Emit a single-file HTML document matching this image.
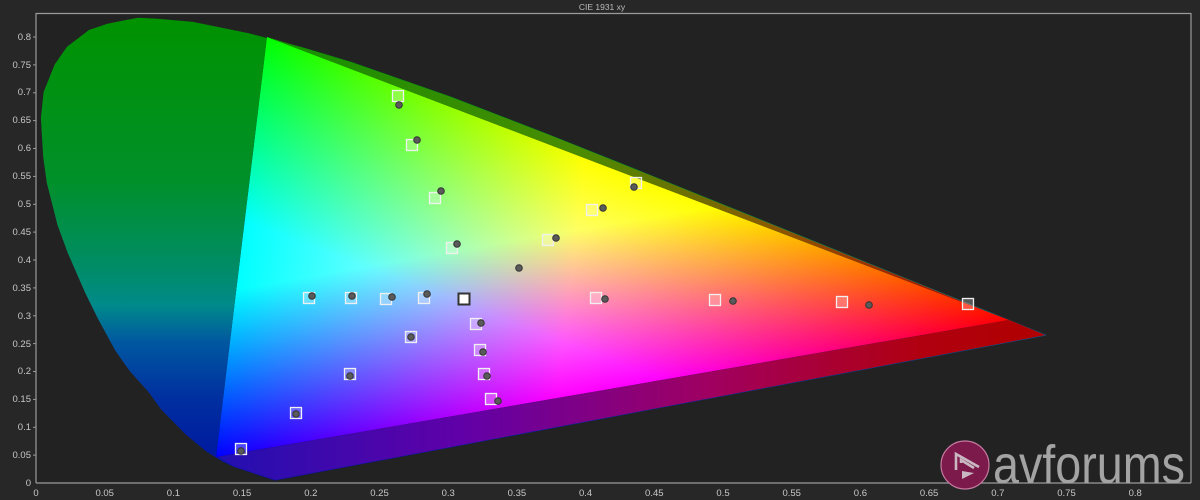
<!DOCTYPE html>
<html><head><meta charset="utf-8"><style>
html,body{margin:0;padding:0;background:#272727;}
svg{display:block;}
text{font-family:"Liberation Sans",sans-serif;}
</style></head><body>
<svg width="1200" height="500" viewBox="0 0 1200 500" xmlns="http://www.w3.org/2000/svg">
<defs>
<linearGradient id="lg" x1="0" y1="20" x2="0" y2="480" gradientUnits="userSpaceOnUse">
<stop offset="0" stop-color="#009200"/>
<stop offset="0.35" stop-color="#00902a"/>
<stop offset="0.55" stop-color="#008c6a"/>
<stop offset="0.62" stop-color="#008a8a"/>
<stop offset="0.7" stop-color="#0058a0"/>
<stop offset="0.82" stop-color="#0030a0"/>
<stop offset="1" stop-color="#0010a0"/>
</linearGradient>
<linearGradient id="ug" x1="267" y1="0" x2="1045" y2="0" gradientUnits="userSpaceOnUse">
<stop offset="0" stop-color="#129000"/>
<stop offset="0.4" stop-color="#4a8c00"/>
<stop offset="0.65" stop-color="#8a5a00"/>
<stop offset="0.85" stop-color="#a81800"/>
<stop offset="1" stop-color="#b00000"/>
</linearGradient>
<linearGradient id="bg2" x1="210" y1="0" x2="1045" y2="0" gradientUnits="userSpaceOnUse">
<stop offset="0" stop-color="#2010b0"/>
<stop offset="0.3" stop-color="#6000a8"/>
<stop offset="0.6" stop-color="#a00060"/>
<stop offset="0.85" stop-color="#b00010"/>
<stop offset="1" stop-color="#b00000"/>
</linearGradient>
<linearGradient id="gr" x1="1009" y1="320" x2="243.9" y2="227.1" gradientUnits="userSpaceOnUse">
<stop offset="0" stop-color="#ff0000" stop-opacity="1"/>
<stop offset="0.57" stop-color="#ff0000" stop-opacity="1"/>
<stop offset="1" stop-color="#ff0000" stop-opacity="0"/>
</linearGradient>
<linearGradient id="gg" x1="267" y1="37" x2="336" y2="436.3" gradientUnits="userSpaceOnUse">
<stop offset="0" stop-color="#00ff00" stop-opacity="1"/>
<stop offset="0.6" stop-color="#00ff00" stop-opacity="1"/>
<stop offset="1" stop-color="#00ff00" stop-opacity="0"/>
</linearGradient>
<linearGradient id="gb" x1="216" y1="457" x2="362.3" y2="73.4" gradientUnits="userSpaceOnUse">
<stop offset="0" stop-color="#0000ff" stop-opacity="1"/>
<stop offset="0.56" stop-color="#0000ff" stop-opacity="1"/>
<stop offset="1" stop-color="#0000ff" stop-opacity="0"/>
</linearGradient>
</defs>
<rect x="0" y="0" width="1200" height="500" fill="#272727"/>
<rect x="36" y="13" width="1155" height="470" fill="#222222"/>
<text x="602" y="10" font-size="8.5" fill="#bbbbbb" text-anchor="middle">CIE 1931 xy</text>
<path d="M275,480 L233.9,466.4 L222.2,460.8 L206.5,451 L186.6,434.6 L161.4,409 L148.8,391.6 L130.4,371.1 L115.7,350.3 L98.4,318.5 L85.5,292.3 L68.3,252.9 L58,224.9 L47.3,182.8 L43.7,156.9 L41.4,117.9 L44.1,92.2 L55.1,64.8 L67.2,47.3 L89.4,30.3 L107.6,24.2 L138.1,18.2 L157.5,19.2 L192.9,22.4 L248.6,33.7 L301,47.3 L351.5,62.5 L450.4,97 L548.6,134.8 L646.2,173.8 L740.2,211.7 L826.3,246.5 L897.5,275.3 L986.1,311.1 L1045.5,335.1 Z" fill="url(#lg)" stroke="url(#lg)" stroke-width="1" stroke-linejoin="round"/>
<path d="M267,37 L301,47.3 L351.5,62.5 L450.4,97 L548.6,134.8 L646.2,173.8 L740.2,211.7 L826.3,246.5 L897.5,275.3 L986.1,311.1 L1045.5,335.1 L1009,320 Z" fill="url(#ug)"/>
<path d="M216,457 L206.5,451 L233.9,466.4 L275,480 L1045.5,335.1 L1009,320 Z" fill="url(#bg2)"/>
<g style="isolation:isolate">
<polygon points="267,37 1009,320 216,457" fill="#000"/>
<polygon points="267,37 1009,320 216,457" fill="url(#gr)" style="mix-blend-mode:screen"/>
<polygon points="267,37 1009,320 216,457" fill="url(#gg)" style="mix-blend-mode:screen"/>
<polygon points="267,37 1009,320 216,457" fill="url(#gb)" style="mix-blend-mode:screen"/>
</g>
<g stroke="#9a9a9a" stroke-width="1.2" fill="none">
<line x1="36" y1="13.5" x2="1191" y2="13.5"/>
<line x1="36" y1="13" x2="36" y2="483"/>
<line x1="36" y1="483" x2="1191" y2="483"/>
<line x1="1191" y1="13" x2="1191" y2="483"/>
</g>
<g fill="#c8c8c8" font-size="9.5" text-anchor="end">
<text x="31" y="486">0</text>
<text x="31" y="458">0.05</text>
<text x="31" y="430">0.1</text>
<text x="31" y="402">0.15</text>
<text x="31" y="374">0.2</text>
<text x="31" y="347">0.25</text>
<text x="31" y="319">0.3</text>
<text x="31" y="291">0.35</text>
<text x="31" y="263">0.4</text>
<text x="31" y="235">0.45</text>
<text x="31" y="207">0.5</text>
<text x="31" y="179">0.55</text>
<text x="31" y="151">0.6</text>
<text x="31" y="123">0.65</text>
<text x="31" y="95">0.7</text>
<text x="31" y="68">0.75</text>
<text x="31" y="40">0.8</text>
</g>
<g stroke="#9a9a9a" stroke-width="1">
<line x1="33" y1="455.1" x2="36" y2="455.1"/><line x1="33" y1="427.3" x2="36" y2="427.3"/><line x1="33" y1="399.4" x2="36" y2="399.4"/><line x1="33" y1="371.5" x2="36" y2="371.5"/><line x1="33" y1="343.6" x2="36" y2="343.6"/><line x1="33" y1="315.8" x2="36" y2="315.8"/><line x1="33" y1="287.9" x2="36" y2="287.9"/><line x1="33" y1="260" x2="36" y2="260"/><line x1="33" y1="232.1" x2="36" y2="232.1"/><line x1="33" y1="204.3" x2="36" y2="204.3"/><line x1="33" y1="176.4" x2="36" y2="176.4"/><line x1="33" y1="148.5" x2="36" y2="148.5"/><line x1="33" y1="120.6" x2="36" y2="120.6"/><line x1="33" y1="92.8" x2="36" y2="92.8"/><line x1="33" y1="64.9" x2="36" y2="64.9"/><line x1="33" y1="37" x2="36" y2="37"/>
</g>
<g fill="#c8c8c8" font-size="9.5" text-anchor="middle">
<text x="36" y="496">0</text><text x="104.7" y="496">0.05</text><text x="173.4" y="496">0.1</text><text x="242.1" y="496">0.15</text><text x="310.8" y="496">0.2</text><text x="379.5" y="496">0.25</text><text x="448.2" y="496">0.3</text><text x="516.9" y="496">0.35</text><text x="585.6" y="496">0.4</text><text x="654.3" y="496">0.45</text><text x="723" y="496">0.5</text><text x="791.7" y="496">0.55</text><text x="860.4" y="496">0.6</text><text x="929.1" y="496">0.65</text><text x="997.8" y="496">0.7</text><text x="1066.5" y="496">0.75</text><text x="1135.2" y="496">0.8</text>
</g>
<g fill="rgba(255,255,255,0.25)" stroke="#f0f0f0" stroke-width="1.3">
<rect x="392.5" y="90.5" width="11" height="11"/>
<rect x="406.5" y="139.5" width="11" height="11"/>
<rect x="429.5" y="192.5" width="11" height="11"/>
<rect x="446.5" y="242.5" width="11" height="11"/>
<rect x="586.5" y="204.5" width="11" height="11"/>
<rect x="542.5" y="234.5" width="11" height="11"/>
<rect x="630.5" y="177.5" width="11" height="11"/>
<rect x="303.5" y="292.5" width="11" height="11"/>
<rect x="345.5" y="292.5" width="11" height="11"/>
<rect x="380.5" y="293.5" width="11" height="11"/>
<rect x="418.5" y="292.5" width="11" height="11"/>
<rect x="590.5" y="292.5" width="11" height="11"/>
<rect x="709.5" y="294.5" width="11" height="11"/>
<rect x="836.5" y="296.5" width="11" height="11"/>
<rect x="962.5" y="298.5" width="11" height="11"/>
<rect x="470.5" y="318.5" width="11" height="11"/>
<rect x="405.5" y="331.5" width="11" height="11"/>
<rect x="474.5" y="344.5" width="11" height="11"/>
<rect x="344.5" y="368.5" width="11" height="11"/>
<rect x="478.5" y="368.5" width="11" height="11"/>
<rect x="485.5" y="393.5" width="11" height="11"/>
<rect x="290.5" y="407.5" width="11" height="11"/>
<rect x="235.5" y="443.5" width="11" height="11"/>
</g>
<rect x="458.5" y="293.5" width="11" height="11" fill="#ffffff" stroke="#333" stroke-width="2"/>
<g fill="#5a5a5a" stroke="#333" stroke-width="1">
<circle cx="399" cy="105" r="3.3"/><circle cx="417" cy="140" r="3.3"/><circle cx="441" cy="191" r="3.3"/><circle cx="457" cy="244" r="3.3"/><circle cx="603" cy="208" r="3.3"/><circle cx="556" cy="238" r="3.3"/><circle cx="634" cy="187" r="3.3"/><circle cx="519" cy="268" r="3.3"/><circle cx="312" cy="296" r="3.3"/><circle cx="352" cy="296" r="3.3"/><circle cx="392" cy="297" r="3.3"/><circle cx="427" cy="294" r="3.3"/><circle cx="605" cy="299" r="3.3"/><circle cx="733" cy="301" r="3.3"/><circle cx="869" cy="305" r="3.3"/><circle cx="481" cy="323" r="3.3"/><circle cx="411" cy="337" r="3.3"/><circle cx="483" cy="352" r="3.3"/><circle cx="350" cy="376" r="3.3"/><circle cx="487" cy="376" r="3.3"/><circle cx="498" cy="401" r="3.3"/><circle cx="296" cy="414" r="3.3"/><circle cx="241" cy="451" r="3.3"/>
</g>
<circle cx="965" cy="465" r="24" fill="#7c1a4b" stroke="#c57aa0" stroke-width="1.2"/>
<g fill="none" stroke="#c9b7c2" stroke-width="2.6" stroke-linejoin="miter">
<path d="M956,470 L956,454 L979,467"/>
<path d="M961,463 L961,460 L974,468"/>
</g>
<path d="M962,471 L962,479 L974,473 Z" fill="#c9b7c2"/>
<text x="993" y="483" font-size="54" fill="#a3a3a3" textLength="192" lengthAdjust="spacingAndGlyphs">avforums</text>
</svg>
</body></html>
